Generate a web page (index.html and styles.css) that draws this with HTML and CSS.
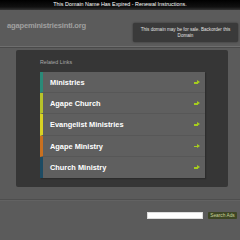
FILE: index.html
```html
<!DOCTYPE html>
<html>
<head>
<meta charset="utf-8">
<link rel="stylesheet" href="styles.css">
</head>
<body>
<div class="topbar">This Domain Name Has Expired - Renewal Instructions.</div>
<div class="header">
  <div class="domain">agapeministriesintl.org</div>
  <div class="sale">This domain may be for sale. Backorder this Domain</div>
</div>
<div class="main">
  <div class="panel">
    <div class="related">Related Links</div>
    <ul class="links">
      <li class="c1"><span>Ministries</span><i class="arrow"></i></li>
      <li class="c2"><span>Agape Church</span><i class="arrow"></i></li>
      <li class="c3"><span>Evangelist Ministries</span><i class="arrow"></i></li>
      <li class="c4"><span>Agape Ministry</span><i class="arrow"></i></li>
      <li class="c5"><span>Church Ministry</span><i class="arrow"></i></li>
    </ul>
  </div>
</div>
<div class="footer">
  <div class="search"><div class="input"></div><div class="btn">Search Ads</div></div>
</div>
</body>
</html>
```
FILE: styles.css
```css
html, body { margin: 0; padding: 0; }
body {
  width: 240px; height: 240px; overflow: hidden;
  background: #5b5b5b;
  font-family: "Liberation Sans", Arial, sans-serif;
}
.topbar {
  height: 10px;
  background: linear-gradient(#000, #111 70%, #333);
  color: #fff;
  font-size: 5.4px;
  line-height: 9px;
  text-align: center;
}
.header {
  height: 36px;
  display: flex;
  justify-content: space-between;
  align-items: flex-start;
  border-bottom: 1px solid #6e6e6e;
  box-shadow: 0 1px 0 #4a4a4a;
}
.domain {
  margin: 11px 0 0 7px;
  color: #a0a0a0;
  font-size: 7.6px;
  font-weight: bold;
  letter-spacing: -0.2px;
}
.sale {
  margin: 13px 2px 0 0;
  width: 105px;
  height: 19px;
  box-sizing: border-box;
  background: #3a3a3a;
  border-radius: 2px;
  box-shadow: 0 0 2px #2a2a2a;
  color: #e0e0e0;
  font-size: 4.6px;
  line-height: 5.5px;
  text-align: center;
  padding: 4px 4px 0;
}
.main {
  height: 153px;
  padding: 3px 12px 0 16px;
  box-sizing: border-box;
  border-bottom: 1px solid #4e4e4e;
}
.panel {
  height: 137px;
  background: #363636;
  border-radius: 2px;
  padding: 9px 23px 0 24px;
  box-sizing: border-box;
}
.related {
  color: #a8a8a8;
  font-size: 5.3px;
  height: 13px;
  line-height: 6px;
}
.links {
  list-style: none;
  margin: 0;
  padding: 0;
  background: #5f5f5f;
  box-shadow: 1px 1px 1px #2c2c2c;
}
.links li {
  height: 21.2px;
  display: flex;
  align-items: center;
  justify-content: space-between;
  border-left: 3px solid #2a8a78;
  border-bottom: 1px solid #575757;
  box-sizing: border-box;
  padding: 1px 5px 0 7px;
  color: #fff;
  font-weight: bold;
  font-size: 7.4px;
}
.links li.c2 { border-left-color: #b6c22a; }
.links li.c3 { border-left-color: #d8d223; }
.links li.c4 { border-left-color: #c9701f; }
.links li.c5 { border-left-color: #1d4b63; border-bottom: none; }
.links li.c1 { border-left-color: #2a8a78; }
.arrow {
  position: relative;
  width: 6px; height: 5px;
}
.arrow::before {
  content: "";
  position: absolute;
  left: 0; top: 2px;
  width: 4px; height: 1.6px;
  background: #a6cc1e;
}
.arrow::after {
  content: "";
  position: absolute;
  left: 3px; top: 0;
  border-left: 3px solid #a6cc1e;
  border-top: 2.8px solid transparent;
  border-bottom: 2.8px solid transparent;
}
.footer {
  height: 40px;
  border-top: 1px solid #626262;
}
.search {
  display: flex;
  justify-content: flex-end;
  align-items: center;
  gap: 5px;
  margin-top: 11px;
  padding-right: 3px;
}
.input {
  width: 56px; height: 7px;
  background: #fff;
  border: 1px solid #ddd;
  box-sizing: border-box;
}
.btn {
  width: 29px; height: 7px;
  background: #3d4524;
  color: #c8d49a;
  font-size: 4.8px;
  line-height: 7px;
  text-align: center;
  border-radius: 1px;
}
```
